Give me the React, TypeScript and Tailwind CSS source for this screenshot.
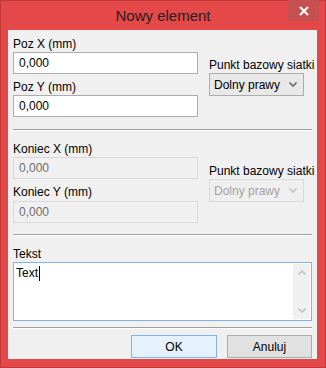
import React from 'react';

const font = { fontFamily: '"Liberation Sans", Arial, sans-serif' };

const Chevron: React.FC<{ up?: boolean; color: string }> = ({ up, color }) => (
  <svg width="8" height="5" viewBox="0 0 8 5" className={up ? 'rotate-180' : ''}>
    <path d="M0.5 0.5 L4 4 L7.5 0.5" fill="none" stroke={color} strokeWidth="1.6" />
  </svg>
);

const Field: React.FC<{ value: string; disabled?: boolean }> = ({ value, disabled }) => (
  <div
    className={
      disabled
        ? 'h-[22px] w-[185px] border border-[#d9d9d9] bg-[#f0f0f0] pl-[5px] flex items-center text-[#6d6d6d]'
        : 'h-[22px] w-[185px] border border-[#abadb3] bg-white pl-[5px] flex items-center text-black'
    }
  >
    {value}
  </div>
);

const Combo: React.FC<{ disabled?: boolean }> = ({ disabled }) => (
  <div
    className={
      disabled
        ? 'h-[23px] w-[95px] border border-[#d9d9d9] bg-[#efefef] pl-[4px] pr-[6px] flex items-center justify-between text-[#a3a3a3]'
        : 'h-[23px] w-[95px] border border-[#acacac] bg-[#e8e8e8] pl-[4px] pr-[6px] flex items-center justify-between text-black'
    }
  >
    <span>Dolny prawy</span>
    <Chevron color={disabled ? '#c4c4c4' : '#6a6a6a'} />
  </div>
);

const Separator: React.FC = () => (
  <div className="h-[2px] border-t border-[#a0a0a0] border-b border-b-white" />
);

const App: React.FC = () => {
  return (
    <div
      style={font}
      className="w-[326px] h-[368px] bg-[#e44848] border border-[#c23a3a] flex flex-col text-[12px] leading-none"
    >
      {/* Title bar */}
      <div className="relative h-[29px] flex items-center justify-center">
        <span className="text-[15px] text-[#222] -mt-[1px]">Nowy element</span>
        <div className="absolute right-[6px] top-[-1px] w-[31px] h-[21px] bg-[#c65050] flex items-center justify-center text-white">
          <svg width="10" height="10" viewBox="0 0 10 10">
            <path d="M1 1 L9 9 M9 1 L1 9" stroke="white" strokeWidth="2" />
          </svg>
        </div>
      </div>

      {/* Client area */}
      <div className="ml-[7px] mr-[8px] mb-[8px] flex-1 bg-[#f0f0f0] px-[5px] pt-[6px]">
        {/* Position */}
        <div className="flex">
          <div className="w-[185px]">
            <div className="h-[16px] flex items-center">Poz X (mm)</div>
            <Field value="0,000" />
            <div className="mt-[4px] h-[17px] flex items-center">Poz Y (mm)</div>
            <Field value="0,000" />
          </div>
          <div className="ml-[11px] mt-[21px]">
            <div className="h-[16px] flex items-center whitespace-nowrap">Punkt bazowy siatki</div>
            <Combo />
          </div>
        </div>

        <div className="mt-[12px]">
          <Separator />
        </div>

        {/* End */}
        <div className="flex mt-[10px]">
          <div className="w-[185px]">
            <div className="h-[16px] flex items-center">Koniec X (mm)</div>
            <Field value="0,000" disabled />
            <div className="mt-[4px] h-[18px] flex items-center">Koniec Y (mm)</div>
            <Field value="0,000" disabled />
          </div>
          <div className="ml-[11px] mt-[22px]">
            <div className="h-[16px] flex items-center whitespace-nowrap">Punkt bazowy siatki</div>
            <Combo disabled />
          </div>
        </div>

        <div className="mt-[11px]">
          <Separator />
        </div>

        {/* Text */}
        <div className="mt-[10px] h-[16px] flex items-center">Tekst</div>
        <div className="h-[59px] border border-[#7eb4ea] bg-white flex">
          <div className="flex-1 pl-[2px] pt-[3px] text-black">
            <span className="inline-block border-r border-black pr-[1px] leading-[15px]">Text</span>
          </div>
          <div className="w-[17px] my-[1px] mr-[1px] bg-[#f0f0f0] flex flex-col items-center justify-between py-[6px]">
            <Chevron up color="#c2c2c2" />
            <Chevron color="#c2c2c2" />
          </div>
        </div>

        <div className="mt-[6px]">
          <Separator />
        </div>

        {/* Buttons */}
        <div className="mt-[6px] flex justify-end gap-[10px]">
          <div className="w-[86px] h-[23px] border border-[#7eb4ea] bg-[#e5f1fb] flex items-center justify-center text-black">
            OK
          </div>
          <div className="w-[85px] h-[23px] border border-[#adadad] bg-[#e1e1e1] flex items-center justify-center text-black">
            Anuluj
          </div>
        </div>
      </div>
    </div>
  );
};

export default App;
